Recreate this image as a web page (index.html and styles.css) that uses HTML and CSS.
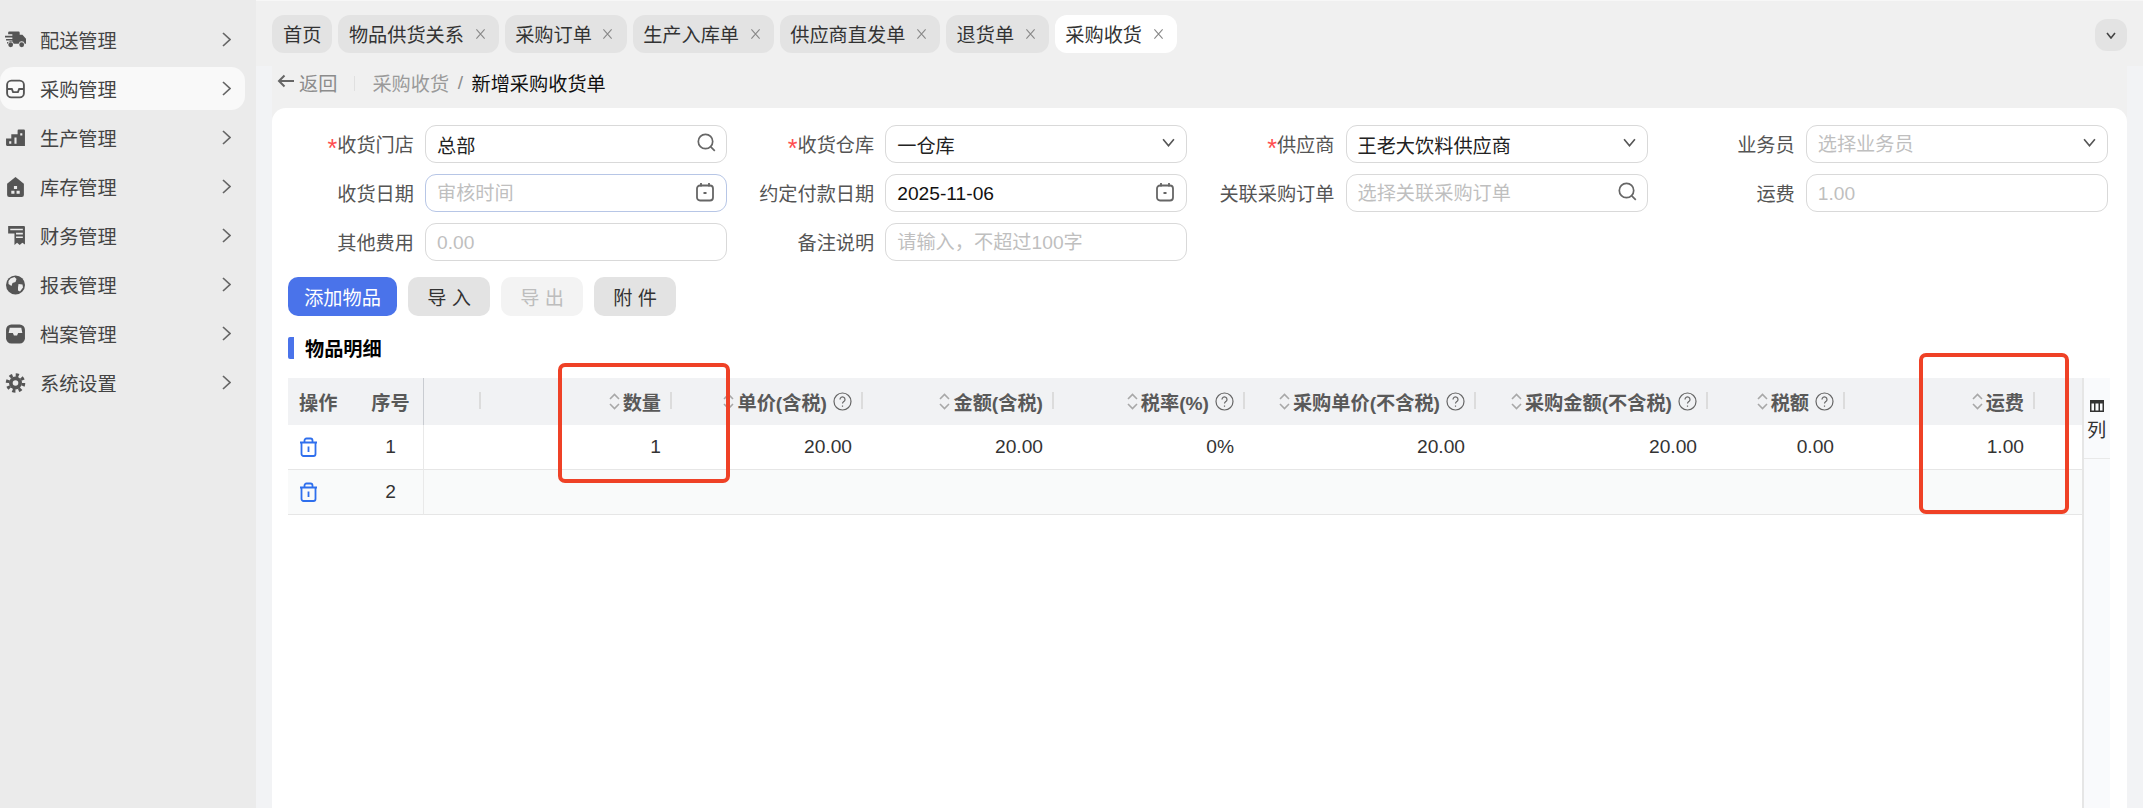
FILE: index.html
```html
<!DOCTYPE html>
<html lang="zh-CN">
<head>
<meta charset="utf-8">
<title>新增采购收货单</title>
<link rel="stylesheet" href="styles.css">
</head>
<body>
<div class="app">
  <aside class="sidebar">
    <nav class="menu">
      <a class="menu-item"><svg class="menu-icon" viewBox="0 0 20 16"><path d="M4 0h9a1 1 0 0 1 1 1v2h2.600L20 6.800V11.500h-1.200a3 3 0 0 0-5.800 0H8.300a3 3 0 0 0-5.800 0H2V10h5V8.500H1V7h6V5.500H0V4h7V2.500H3V1a1 1 0 0 1 1-1z"/><circle cx="5.400" cy="12.500" r="2.300"/><circle cx="15.900" cy="12.500" r="2.300"/></svg><span class="menu-text">配送管理</span><svg class="chev" viewBox="0 0 9 15"><path d="M1 1l7 6.500L1 14"/></svg></a>
      <a class="menu-item is-active"><svg class="menu-icon" viewBox="0 0 20 18"><rect class="line" x="2" y="1" width="16" height="16" rx="4"/><path class="line" d="M2 9h4.500l1.200 3h4.600l1.200-3H18"/></svg><span class="menu-text">采购管理</span><svg class="chev" viewBox="0 0 9 15"><path d="M1 1l7 6.500L1 14"/></svg></a>
      <a class="menu-item"><svg class="menu-icon" viewBox="0 0 20 17"><path d="M1 9h5V5h6V1.500a1 1 0 0 1 1-1h5a1 1 0 0 1 1 1V16H2a1 1 0 0 1-1-1z"/><path class="hole" d="M4 11.500h2v2.500H4zM9 8h2v6H9zM14.500 4h2v2h-2z"/></svg><span class="menu-text">生产管理</span><svg class="chev" viewBox="0 0 9 15"><path d="M1 1l7 6.500L1 14"/></svg></a>
      <a class="menu-item"><svg class="menu-icon" viewBox="0 0 20 19"><path d="M10 0l8 6.500V17a2 2 0 0 1-2 2H4a2 2 0 0 1-2-2V6.500z"/><path class="hole" d="M8.500 8.500h3v3h-3zM6 13h3v3H6zM11 13h3v3h-3z"/></svg><span class="menu-text">库存管理</span><svg class="chev" viewBox="0 0 9 15"><path d="M1 1l7 6.500L1 14"/></svg></a>
      <a class="menu-item"><svg class="menu-icon" viewBox="0 0 20 19"><path d="M3 0h15a1 1 0 0 1 1 1v16.500l-2.500-1.500-2.500 2-2.500-2-2.500 2V7H3z"/><path class="hole" d="M5 2.500h12v1.500H5zM10.500 6.500H17V8h-6.500zM10.500 10H17v1.500h-6.500z"/></svg><span class="menu-text">财务管理</span><svg class="chev" viewBox="0 0 9 15"><path d="M1 1l7 6.500L1 14"/></svg></a>
      <a class="menu-item"><svg class="menu-icon" viewBox="0 0 20 20"><circle cx="10" cy="10" r="9.500"/><path class="hole" d="M5 3.500l4-1.500 2 2-1 3-3 1-1 3-3-2 0-3zM13 9l4 0.500 0.500 3-3 4-2-1 0-3z"/></svg><span class="menu-text">报表管理</span><svg class="chev" viewBox="0 0 9 15"><path d="M1 1l7 6.500L1 14"/></svg></a>
      <a class="menu-item"><svg class="menu-icon" viewBox="0 0 20 18"><rect x="1" y="0" width="18" height="18" rx="5"/><path class="hole" d="M4.500 3h11l1 5h-4l-1 2.500h-3L7.500 8h-4z"/></svg><span class="menu-text">档案管理</span><svg class="chev" viewBox="0 0 9 15"><path d="M1 1l7 6.500L1 14"/></svg></a>
      <a class="menu-item"><svg class="menu-icon" viewBox="0 0 20 20"><circle cx="10" cy="10" r="6.500"/><circle class="teeth" cx="10" cy="10" r="8"/><circle class="hole" cx="10" cy="10" r="2.800"/></svg><span class="menu-text">系统设置</span><svg class="chev" viewBox="0 0 9 15"><path d="M1 1l7 6.500L1 14"/></svg></a>
    </nav>
  </aside>

  <main class="main">
    <header class="tabbar">
      <div class="tab tab-home"><span>首页</span></div>
      <div class="tab"><span>物品供货关系</span><svg class="tab-x" viewBox="0 0 12 12"><path d="M1.500 1l9 10M10.500 1l-9 10"/></svg></div>
      <div class="tab"><span>采购订单</span><svg class="tab-x" viewBox="0 0 12 12"><path d="M1.500 1l9 10M10.500 1l-9 10"/></svg></div>
      <div class="tab"><span>生产入库单</span><svg class="tab-x" viewBox="0 0 12 12"><path d="M1.500 1l9 10M10.500 1l-9 10"/></svg></div>
      <div class="tab"><span>供应商直发单</span><svg class="tab-x" viewBox="0 0 12 12"><path d="M1.500 1l9 10M10.500 1l-9 10"/></svg></div>
      <div class="tab"><span>退货单</span><svg class="tab-x" viewBox="0 0 12 12"><path d="M1.500 1l9 10M10.500 1l-9 10"/></svg></div>
      <div class="tab is-current"><span>采购收货</span><svg class="tab-x" viewBox="0 0 12 12"><path d="M1.500 1l9 10M10.500 1l-9 10"/></svg></div>
      <button class="tab-more"><svg class="tab-more-icon" viewBox="0 0 10 7"><path d="M1 1l4 5 4-5"/></svg></button>
    </header>

    <section class="workspace">
      <div class="crumbs">
        <svg class="back-arrow" viewBox="0 0 18 14"><path d="M17 7H2M7.500 1.500L2 7l5.500 5.500"/></svg>
        <span class="back-text">返回</span>
        <i class="crumb-sep"></i>
        <span class="crumb-link">采购收货</span>
        <span class="crumb-slash">/</span>
        <span class="crumb-current">新增采购收货单</span>
      </div>

      <div class="card">
        <form class="form-grid">
          <div class="field"><label class="field-label"><b>*</b>收货门店</label><div class="box"><input class="box-input" value="总部"><svg class="box-icon" viewBox="0 0 19 19"><circle cx="8.500" cy="8.500" r="7.200"/><path d="M13.800 13.800l4 4"/></svg></div></div>
          <div class="field"><label class="field-label"><b>*</b>收货仓库</label><div class="box"><input class="box-input" value="一仓库"><svg class="box-chev" viewBox="0 0 12 8"><path d="M1 1l5 6 5-6"/></svg></div></div>
          <div class="field"><label class="field-label"><b>*</b>供应商</label><div class="box"><input class="box-input" value="王老大饮料供应商"><svg class="box-chev" viewBox="0 0 12 8"><path d="M1 1l5 6 5-6"/></svg></div></div>
          <div class="field"><label class="field-label">业务员</label><div class="box"><input class="box-input" placeholder="选择业务员"><svg class="box-chev" viewBox="0 0 12 8"><path d="M1 1l5 6 5-6"/></svg></div></div>

          <div class="field"><label class="field-label">收货日期</label><div class="box is-hover"><input class="box-input" placeholder="审核时间"><svg class="box-cal" viewBox="0 0 20 20"><rect x="2" y="3.500" width="16" height="15" rx="3"/><path d="M6 1v3.500M14 1v3.500M8.500 11h3"/></svg></div></div>
          <div class="field"><label class="field-label">约定付款日期</label><div class="box"><input class="box-input is-date" value="2025-11-06"><svg class="box-cal" viewBox="0 0 20 20"><rect x="2" y="3.500" width="16" height="15" rx="3"/><path d="M6 1v3.500M14 1v3.500M8.500 11h3"/></svg></div></div>
          <div class="field"><label class="field-label">关联采购订单</label><div class="box"><input class="box-input" placeholder="选择关联采购订单"><svg class="box-icon" viewBox="0 0 19 19"><circle cx="8.500" cy="8.500" r="7.200"/><path d="M13.800 13.800l4 4"/></svg></div></div>
          <div class="field"><label class="field-label">运费</label><div class="box"><input class="box-input" placeholder="1.00"></div></div>

          <div class="field"><label class="field-label">其他费用</label><div class="box"><input class="box-input" placeholder="0.00"></div></div>
          <div class="field"><label class="field-label">备注说明</label><div class="box"><input class="box-input" placeholder="请输入，不超过100字"></div></div>
        </form>

        <div class="actions">
          <button class="btn btn-primary">添加物品</button>
          <button class="btn">导 入</button>
          <button class="btn btn-disabled">导 出</button>
          <button class="btn">附 件</button>
        </div>

        <h2 class="section-title">物品明细</h2>

        <div class="table-area">
          <table class="grid">
            <colgroup>
              <col class="c-op"><col class="c-no"><col class="c-blank"><col class="c-191"><col class="c-191"><col class="c-191"><col class="c-191"><col class="c-231"><col class="c-232"><col class="c-137"><col class="c-190"><col class="c-tail">
            </colgroup>
            <thead>
              <tr>
                <th class="th-op">操作</th>
                <th class="th-no">序号</th>
                <th class="has-div"></th>
                <th class="has-div"><div class="th-in"><svg class="sorter" viewBox="0 0 11 17"><path d="M1 6l4.500-4.500L10 6M1 11l4.500 4.500L10 11"/></svg><span>数量</span></div></th>
                <th class="has-div"><div class="th-in"><svg class="sorter" viewBox="0 0 11 17"><path d="M1 6l4.500-4.500L10 6M1 11l4.500 4.500L10 11"/></svg><span>单价(含税)</span><svg class="help" viewBox="0 0 19 19"><circle cx="9.500" cy="9.500" r="8.500"/><path d="M7 7.500a2.500 2.500 0 1 1 3.800 2.100c-.9.600-1.300 1-1.300 2M9.500 13.500v1.300"/></svg></div></th>
                <th class="has-div"><div class="th-in"><svg class="sorter" viewBox="0 0 11 17"><path d="M1 6l4.500-4.500L10 6M1 11l4.500 4.500L10 11"/></svg><span>金额(含税)</span></div></th>
                <th class="has-div"><div class="th-in"><svg class="sorter" viewBox="0 0 11 17"><path d="M1 6l4.500-4.500L10 6M1 11l4.500 4.500L10 11"/></svg><span>税率(%)</span><svg class="help" viewBox="0 0 19 19"><circle cx="9.500" cy="9.500" r="8.500"/><path d="M7 7.500a2.500 2.500 0 1 1 3.800 2.100c-.9.600-1.300 1-1.300 2M9.500 13.500v1.300"/></svg></div></th>
                <th class="has-div"><div class="th-in"><svg class="sorter" viewBox="0 0 11 17"><path d="M1 6l4.500-4.500L10 6M1 11l4.500 4.500L10 11"/></svg><span>采购单价(不含税)</span><svg class="help" viewBox="0 0 19 19"><circle cx="9.500" cy="9.500" r="8.500"/><path d="M7 7.500a2.500 2.500 0 1 1 3.800 2.100c-.9.600-1.300 1-1.300 2M9.500 13.500v1.300"/></svg></div></th>
                <th class="has-div"><div class="th-in"><svg class="sorter" viewBox="0 0 11 17"><path d="M1 6l4.500-4.500L10 6M1 11l4.500 4.500L10 11"/></svg><span>采购金额(不含税)</span><svg class="help" viewBox="0 0 19 19"><circle cx="9.500" cy="9.500" r="8.500"/><path d="M7 7.500a2.500 2.500 0 1 1 3.800 2.100c-.9.600-1.300 1-1.300 2M9.500 13.500v1.300"/></svg></div></th>
                <th class="has-div"><div class="th-in"><svg class="sorter" viewBox="0 0 11 17"><path d="M1 6l4.500-4.500L10 6M1 11l4.500 4.500L10 11"/></svg><span>税额</span><svg class="help" viewBox="0 0 19 19"><circle cx="9.500" cy="9.500" r="8.500"/><path d="M7 7.500a2.500 2.500 0 1 1 3.800 2.100c-.9.600-1.300 1-1.300 2M9.500 13.500v1.300"/></svg></div></th>
                <th class="has-div"><div class="th-in"><svg class="sorter" viewBox="0 0 11 17"><path d="M1 6l4.500-4.500L10 6M1 11l4.500 4.500L10 11"/></svg><span>运费</span></div></th>
                <th></th>
              </tr>
            </thead>
            <tbody>
              <tr>
                <td class="td-op"><svg class="trash" viewBox="0 0 19 20"><path d="M2.500 5.500h14v11.500a2 2 0 0 1-2 2h-10a2 2 0 0 1-2-2zM1 5.500h17M5.500 5.500V3.500a2 2 0 0 1 2-2h4a2 2 0 0 1 2 2v2M9.500 9.500v5.500"/></svg></td>
                <td class="td-no">1</td><td></td>
                <td class="num">1</td><td class="num">20.00</td><td class="num">20.00</td><td class="num">0%</td><td class="num">20.00</td><td class="num">20.00</td><td class="num">0.00</td><td class="num">1.00</td><td></td>
              </tr>
              <tr class="row-alt">
                <td class="td-op"><svg class="trash" viewBox="0 0 19 20"><path d="M2.500 5.500h14v11.500a2 2 0 0 1-2 2h-10a2 2 0 0 1-2-2zM1 5.500h17M5.500 5.500V3.500a2 2 0 0 1 2-2h4a2 2 0 0 1 2 2v2M9.500 9.500v5.500"/></svg></td>
                <td class="td-no">2</td><td></td><td></td><td></td><td></td><td></td><td></td><td></td><td></td><td></td><td></td>
              </tr>
            </tbody>
          </table>
          <aside class="col-panel">
            <div class="col-btn"><svg class="col-icon" viewBox="0 0 14 12"><path d="M0 0h14v12H0z M1.500 3.500v7h2.500v-7z M5.500 3.500v7h3v-7z M10 3.500v7h2.500v-7z" fill-rule="evenodd"/></svg><span>列</span></div>
          </aside>
        </div>
      </div>
    </section>
  </main>
</div>
<div class="annot annot-a"></div>
<div class="annot annot-b"></div>
</body>
</html>
```
FILE: styles.css
```css
* { box-sizing: border-box; }
html, body { margin: 0; height: 100%; overflow: hidden; }
body {
  font-family: "Liberation Sans", "Noto Sans CJK SC", sans-serif;
  font-size: 19.2px;
  color: #333;
  background: #f2f3f5;
}
.app { display: flex; height: 808px; }

/* sidebar */
.sidebar { width: 256px; flex: none; background: #ebebeb; padding-top: 18px; }
.menu { display: flex; flex-direction: column; gap: 6px; }
.menu-item {
  width: 245px; height: 43px; display: flex; align-items: center;
  padding: 0 14px 0 5px; border-radius: 14px; color: #444;
}
.menu-item.is-active { background: #f9f9f9; }
.menu-icon { width: 21px; height: 20px; flex: none; fill: #555; }
.menu-icon .line { fill: none; stroke: #555; stroke-width: 1.8; }
.menu-icon .hole { fill: #ebebeb; }
.menu-icon .teeth { fill: none; stroke: #555; stroke-width: 3.5; stroke-dasharray: 3.1 3.18; }
.menu-text { margin-left: 14px; flex: 1; }
.chev { width: 9px; height: 15px; flex: none; fill: none; stroke: #666; stroke-width: 1.7; }

/* main */
.main { flex: 1; min-width: 0; display: flex; flex-direction: column; }
.tabbar {
  height: 66px; flex: none; background: #f0f0f0;
  display: flex; align-items: flex-start; gap: 6px; padding: 15px 16px 0;
  border-top: 1px solid #f7f7f7;
}
.tab {
  height: 38px; margin-top: -1px; padding: 0 13.200px 0 10.500px; background: #e3e3e3; border-radius: 12px;
  display: flex; align-items: center; gap: 10.500px; color: #333; white-space: nowrap;
}
.tab.tab-home { padding: 0 11px; }
.tab.is-current { background: #fff; }
.tab-x { width: 11px; height: 12px; fill: none; stroke: #888; stroke-width: 1.2; flex: none; }
.tab-more {
  margin-left: auto; margin-top: 3px; width: 32px; height: 32px; border: 0; padding: 0;
  background: #e3e3e3; border-radius: 12px; display: flex; align-items: center; justify-content: center;
}
.tab-more-icon { width: 10px; height: 7px; fill: none; stroke: #444; stroke-width: 1.6; }

.workspace { flex: 1; min-height: 0; margin: 0 16px; background: #f0f0f0; display: flex; flex-direction: column; }
.crumbs { height: 34px; margin-bottom: 8px; flex: none; display: flex; align-items: center; padding-left: 5px; white-space: nowrap; }
.back-arrow { width: 18px; height: 14px; fill: none; stroke: #666; stroke-width: 2; margin-top: -4px; }
.back-text { margin-left: 4px; color: #8c8c8c; }
.crumb-sep { width: 1px; height: 15px; background: #e0e0e0; margin: 0 17px; }
.crumb-link { color: #9a9a9a; }
.crumb-slash { color: #8c8c8c; margin: 0 8.500px; }
.crumb-current { color: #111; }

/* card */
.card { flex: 1; min-height: 0; background: #fff; border-radius: 14px 14px 0 0; padding-top: 17px; display: flex; flex-direction: column; }
.form-grid { display: grid; grid-template-columns: repeat(4, 460.250px); row-gap: 11px; }
.field { display: flex; align-items: center; gap: 11px; height: 38px; }
.field-label { width: 142px; flex: none; text-align: right; color: #555; white-space: nowrap; }
.field-label b { color: #ff4d4f; font-weight: 400; font-size: 25px; line-height: 0; vertical-align: -5px; }
.box {
  width: 302px; height: 38px; flex: none; background: #fff; border: 1px solid #d9d9d9; border-radius: 11px;
  display: flex; align-items: center; padding: 0 11px;
}
.box.is-hover { border-color: #b7c6e6; }
.box-input {
  flex: 1; min-width: 0; border: 0; outline: 0; padding: 2px 0 0; background: transparent;
  font: inherit; color: #222; height: 100%;
}
.box-input.is-date { color: #111; }
.box-input::placeholder { color: #bfbfbf; opacity: 1; }
.box-icon { width: 19px; height: 19px; flex: none; fill: none; stroke: #666; stroke-width: 1.7; margin: -3px -1px 0 0; }
.box-chev { width: 13px; height: 9px; flex: none; fill: none; stroke: #555; stroke-width: 1.5; margin: -4px 0 0 0; }
.box-cal { width: 20px; height: 20px; flex: none; fill: none; stroke: #666; stroke-width: 1.8; margin: -3px 0 0 0; }

.actions { display: flex; gap: 11px; margin: 16px 0 0 16px; }
.btn {
  height: 39px; min-width: 82px; padding: 0; border: 0; border-radius: 10px;
  font: inherit; color: #333; background: #e3e3e3; white-space: nowrap;
}
.btn-primary { background: #4a73ea; color: #fff; width: 109px; }
.btn-disabled { background: #f3f3f3; color: #bdbdbd; }

.section-title {
  margin: 21px 0 0 16px; height: 22px; display: flex; align-items: center;
  border-left: 6px solid #4a73ea; padding-left: 11px; border-radius: 2px;
  font-size: 19.2px; font-weight: 700; color: #000;
}

/* table */
.table-area { flex: 1; min-height: 0; margin: 19px 0 0 16px; display: flex; }
.grid { width: 1794px; flex: none; align-self: flex-start; table-layout: fixed; border-collapse: separate; border-spacing: 0; }
.c-op { width: 70px; } .c-no { width: 66px; } .c-blank { width: 57px; }
.c-191 { width: 191px; } .c-231 { width: 231px; } .c-232 { width: 232px; }
.c-137 { width: 137px; } .c-190 { width: 190px; } .c-tail { width: 47px; }
.grid th {
  position: relative; height: 47px; padding: 0 11px; background: #f1f2f4; color: #595959;
  font-weight: 700; white-space: nowrap; text-align: left;
}
.grid .th-no { text-align: center; padding: 0; border-right: 1px solid #c9ccd1; }
.grid th.has-div::after {
  content: ""; position: absolute; right: 0; top: 14px; width: 2px; height: 17px; background: #dcdcdc;
}
.th-in { display: flex; align-items: center; justify-content: flex-end; gap: 3px; }
.sorter { width: 11px; height: 17px; flex: none; fill: none; stroke: #a8a8a8; stroke-width: 1.6; }
.help { width: 19px; height: 19px; flex: none; margin-left: 3px; fill: none; stroke: #666; stroke-width: 1.2; }
.grid td { height: 45px; padding: 0 11px; border-bottom: 1px solid #e6e6e6; color: #333; white-space: nowrap; }
.grid .td-no { text-align: center; padding: 0; border-right: 1px solid #e9e9e9; }
.grid .td-op { line-height: 0; }
.grid .num { text-align: right; }
.row-alt td { background: #f9fafa; }
.trash { width: 19px; height: 20px; fill: none; stroke: #2f6fed; stroke-width: 1.8; }

.col-panel { width: 28px; flex: none; background: #f9fafc; border-left: 2px solid #e6e6e6; }
.col-btn {
  height: 81px; border-bottom: 1px solid #e9e9e9; display: flex; flex-direction: column; align-items: center;
  padding-top: 22px; color: #333; line-height: 24px; overflow: hidden;
}
.col-btn span { margin-left: -1px; margin-top: 7px; }
.col-icon { width: 14px; height: 12px; fill: #333; flex: none; }

/* review annotations drawn over the screenshot */
.annot { position: absolute; border: 4px solid #ef4126; border-radius: 7px; pointer-events: none; }
.annot-a { left: 558px; top: 363px; width: 172px; height: 120px; }
.annot-b { left: 1919px; top: 353px; width: 150px; height: 161px; }
```
